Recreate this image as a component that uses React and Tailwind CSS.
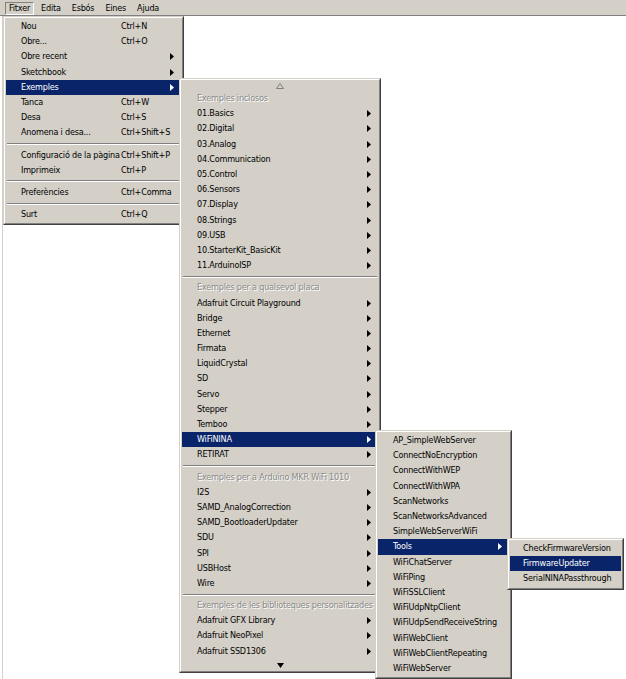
import clsx from "clsx";

// Classic Windows-style File menu with cascaded example submenus
const fileMenu = [
  { label: "Nou", keys: "Ctrl+N" },
  { label: "Obre...", keys: "Ctrl+O" },
  { label: "Obre recent", sub: true },
  { label: "Sketchbook", sub: true },
  { label: "Exemples", sub: true, on: true },
  { label: "Tanca", keys: "Ctrl+W" },
  { label: "Desa", keys: "Ctrl+S" },
  { label: "Anomena i desa...", keys: "Ctrl+Shift+S" },
  { sep: true },
  { label: "Configuració de la pàgina", keys: "Ctrl+Shift+P" },
  { label: "Imprimeix", keys: "Ctrl+P" },
  { sep: true },
  { label: "Preferències", keys: "Ctrl+Comma" },
  { sep: true },
  { label: "Surt", keys: "Ctrl+Q" },
];

const sub = (labels) => labels.map((label) => ({ label, sub: true }));

const examplesMenu = [
  { up: true },
  { head: "Exemples inclosos" },
  ...sub([
    "01.Basics",
    "02.Digital",
    "03.Analog",
    "04.Communication",
    "05.Control",
    "06.Sensors",
    "07.Display",
    "08.Strings",
    "09.USB",
    "10.StarterKit_BasicKit",
    "11.ArduinoISP",
  ]),
  { sep: true },
  { head: "Exemples per a qualsevol placa" },
  ...sub([
    "Adafruit Circuit Playground",
    "Bridge",
    "Ethernet",
    "Firmata",
    "LiquidCrystal",
    "SD",
    "Servo",
    "Stepper",
    "Temboo",
  ]),
  { label: "WiFiNINA", sub: true, on: true },
  { label: "RETIRAT", sub: true },
  { sep: true },
  { head: "Exemples per a Arduino MKR WiFi 1010" },
  ...sub([
    "I2S",
    "SAMD_AnalogCorrection",
    "SAMD_BootloaderUpdater",
    "SDU",
    "SPI",
    "USBHost",
    "Wire",
  ]),
  { sep: true },
  { head: "Exemples de les biblioteques personalitzades" },
  ...sub(["Adafruit GFX Library", "Adafruit NeoPixel", "Adafruit SSD1306"]),
  { down: true },
];

const wifiMenu = [
  { label: "AP_SimpleWebServer" },
  { label: "ConnectNoEncryption" },
  { label: "ConnectWithWEP" },
  { label: "ConnectWithWPA" },
  { label: "ScanNetworks" },
  { label: "ScanNetworksAdvanced" },
  { label: "SimpleWebServerWiFi" },
  { label: "Tools", sub: true, on: true },
  { label: "WiFiChatServer" },
  { label: "WiFiPing" },
  { label: "WiFiSSLClient" },
  { label: "WiFiUdpNtpClient" },
  { label: "WiFiUdpSendReceiveString" },
  { label: "WiFiWebClient" },
  { label: "WiFiWebClientRepeating" },
  { label: "WiFiWebServer" },
];

const toolsMenu = [
  { label: "CheckFirmwareVersion" },
  { label: "FirmwareUpdater", on: true },
  { label: "SerialNINAPassthrough" },
];

const Arrow = () => (
  <svg width="4" height="7" viewBox="0 0 4 7" className="shrink-0">
    <polygon points="0,0 4,3.5 0,7" fill="currentColor" />
  </svg>
);

function Row({ item, labelW, pad }) {
  if (item.sep)
    return (
      <div className="h-[7px] flex items-center px-px">
        <div className="w-full border-t border-b border-t-[#808080] border-b-white" />
      </div>
    );
  if (item.up)
    return (
      <div className="h-[10px] flex items-center justify-center">
        <svg width="8" height="6" viewBox="0 0 8 6">
          <polygon points="4,0.5 7.5,5.5 0.5,5.5" fill="none" stroke="#808080" />
        </svg>
      </div>
    );
  if (item.down)
    return (
      <div className="h-[11px] flex items-center justify-center pt-[2px]">
        <svg width="7" height="5" viewBox="0 0 7 5">
          <polygon points="0,0 7,0 3.5,5" fill="#000" />
        </svg>
      </div>
    );
  if (item.head)
    return (
      <div
        className={clsx(
          "h-[15.2px] flex items-center whitespace-nowrap text-[#8a8a8a] [text-shadow:1px_1px_0_#fff]",
          pad
        )}
      >
        {item.head}
      </div>
    );
  return (
    <div
      className={clsx(
        "h-[15.2px] flex items-center pr-[7px] whitespace-nowrap",
        pad,
        item.on ? "bg-[#0a246a] text-white" : "text-black"
      )}
    >
      <span className={clsx("shrink-0", labelW)}>{item.label}</span>
      {item.keys && <span>{item.keys}</span>}
      <span className="ml-auto">{item.sub && <Arrow />}</span>
    </div>
  );
}

function Menu({ items, className, labelW, pad = "pl-[15px]" }) {
  return (
    <div
      className={clsx(
        "absolute border border-t-[#d4d0c8] border-l-[#d4d0c8] border-r-[#404040] border-b-[#404040]",
        className
      )}
    >
      <div className="border border-t-white border-l-white border-r-[#808080] border-b-[#808080] bg-[#d4d0c8] p-px">
        {items.map((item, i) => (
          <Row key={i} item={item} labelW={labelW} pad={pad} />
        ))}
      </div>
    </div>
  );
}

const bar = ["Fitxer", "Edita", "Esbós", "Eines", "Ajuda"];

export default function App() {
  return (
    <div className="relative w-[626px] h-[679px] overflow-hidden bg-white font-['DejaVu_Sans_Condensed','Liberation_Sans',Arial,sans-serif] text-[9px] tracking-[-0.2px] leading-none">
      <div className="h-[16px] bg-[#d4d0c8] border-b border-[#808080] flex items-start gap-[3px] pl-[5px]">
        {bar.map((name, i) => (
          <div
            key={name}
            className={clsx(
              "mt-[2px] h-[13px] px-[3px] flex items-center border",
              i === 0
                ? "border-t-[#808080] border-l-[#808080] border-r-white border-b-white"
                : "border-transparent"
            )}
          >
            {name}
          </div>
        ))}
      </div>
      <div className="absolute left-[2px] top-[16px] bottom-0 w-px bg-[#d4d0c8]" />

      <Menu items={fileMenu} className="left-[3px] top-[16px] w-[181px]" labelW="w-[100px]" />
      <Menu items={examplesMenu} className="left-[179px] top-[78px] w-[202px]" />
      <Menu items={wifiMenu} className="left-[375px] top-[430px] w-[137px]" />
      <Menu items={toolsMenu} className="left-[507px] top-[538px] w-[117px]" pad="pl-[13px]" />
    </div>
  );
}
